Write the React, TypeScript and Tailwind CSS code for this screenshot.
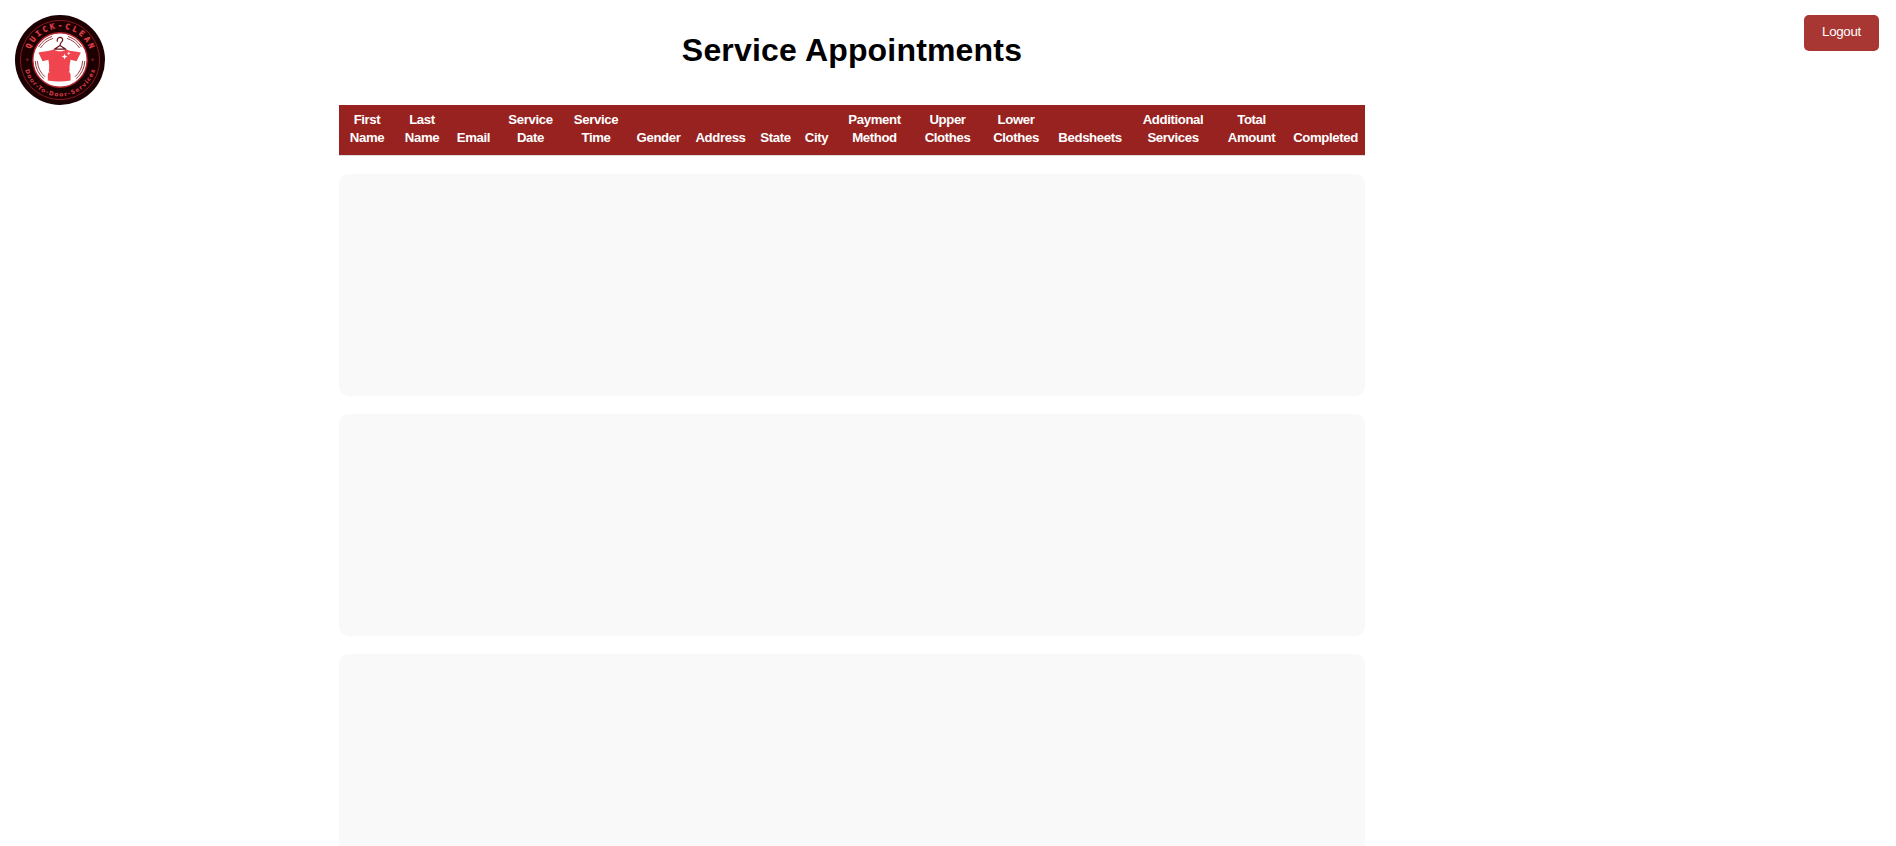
const columns = [
  { lines: ["First", "Name"], width: "w-[56px]" },
  { lines: ["Last", "Name"], width: "w-[54px]" },
  { lines: ["Email"], width: "w-[49px]" },
  { lines: ["Service", "Date"], width: "w-[65px]" },
  { lines: ["Service", "Time"], width: "w-[66px]" },
  { lines: ["Gender"], width: "w-[59px]" },
  { lines: ["Address"], width: "w-[65px]" },
  { lines: ["State"], width: "w-[45px]" },
  { lines: ["City"], width: "w-[37px]" },
  { lines: ["Payment", "Method"], width: "w-[79px]" },
  { lines: ["Upper", "Clothes"], width: "w-[67px]" },
  { lines: ["Lower", "Clothes"], width: "w-[70px]" },
  { lines: ["Bedsheets"], width: "w-[78px]" },
  { lines: ["Additional", "Services"], width: "w-[88px]" },
  { lines: ["Total", "Amount"], width: "w-[69px]" },
  { lines: ["Completed"], width: "w-[79px]" },
];

function Logo() {
  return (
    <svg viewBox="0 0 90 90" className="size-[90px]" role="img" aria-label="Quick-Clean">
      <defs>
        <path id="arc-top" d="M13.4 45a31.6 31.6 0 0 1 63.2 0" />
        <path id="arc-bottom" d="M8.6 45a36.4 36.4 0 0 0 72.8 0" />
      </defs>
      <circle cx="45" cy="45" r="45" fill="#1c0002" />
      <circle cx="45" cy="45" r="39.6" fill="none" stroke="#851a20" strokeWidth="1" />
      <circle cx="45" cy="45" r="27.2" fill="#fff" stroke="#b5222c" strokeWidth="1.4" />
      <text fill="#e0404a" stroke="#e0404a" strokeWidth="0.2" fontSize="7.8" fontWeight="700" fontFamily="'DejaVu Sans Mono', monospace" textAnchor="middle">
        <textPath href="#arc-top" startOffset="50%" textLength="77">QUICK-CLEAN</textPath>
      </text>
      <text fill="#d83c46" fontSize="5.8" fontWeight="700" fontFamily="'DejaVu Sans', sans-serif" textAnchor="middle">
        <textPath href="#arc-bottom" startOffset="50%" textLength="94">Door-To-Door-Services</textPath>
      </text>
      <path d="M12.3 43v3.4M10.6 44.7H14M77.7 43v3.4M76 44.7h3.4" stroke="#8d1c23" strokeWidth="0.8" />
      <g fill="none" stroke="#8f2830" strokeWidth="0.9">
        <path d="M23.6 32A24.9 24.9 0 0 1 37 21.4M25.5 33A22.7 22.7 0 0 1 38 23.4" />
        <path d="M53 21.4A24.9 24.9 0 0 1 66.4 32M52 23.4A22.7 22.7 0 0 1 64.5 33" />
        <path d="M20.2 46A24.9 24.9 0 0 0 29 63.8M22.4 46A22.7 22.7 0 0 0 30 61.8" />
        <path d="M69.8 46A24.9 24.9 0 0 1 61 63.8M67.6 46A22.7 22.7 0 0 1 60 61.8" />
      </g>
      <path
        d="M38.6 34.4c-4 2-10 1.6-15.2 3l4.2 8.8 5.8-1.4c1.4 6.4.8 11-.6 15.2v5.6c7.4 1.2 15.4 1.2 22.8 0V60c-1.6-4.4-1.4-9.6 0-15.2l6 1.4 4.2-8.8c-5-1.2-10.4-1-14.4-3-3.6 2.4-9.2 2.4-12.8 0Z"
        fill="#f0454f"
      />
      <path d="m32.6 55.4 2.6 1.8-2.6.3M56 55l-2.6 2.2 2.6.3" fill="#fff" />
      <path d="m49.6 38.6.8 2.2 2.2.8-2.2.8-.8 2.2-.8-2.2-2.2-.8 2.2-.8Zm4.2-2.2.5 1.4 1.4.5-1.4.5-.5 1.4-.5-1.4-1.4-.5 1.4-.5Z" fill="#fff" />
      <path
        d="M42.2 26.2c-.5-4.8 5.8-4.8 5.5-1.2-.2 2.4-2.7 2-2.7 5.5M45 30.5l-5.7 3.7h11.6L45 30.5"
        fill="none"
        stroke="#651117"
        strokeWidth="1.2"
        strokeLinejoin="round"
        strokeLinecap="round"
      />
    </svg>
  );
}

export default function App() {
  return (
    <div className="h-[846px] overflow-hidden bg-white font-['Liberation_Sans',Arial,sans-serif] text-black">
      <header className="flex h-[105px] items-start pt-[15px] pr-[17px] pl-[15px]">
        <div className="w-[324px] shrink-0">
          <Logo />
        </div>
        <h1 className="w-[1026px] shrink-0 pt-[17px] text-center text-[32px] leading-[37px] font-bold tracking-[0.18px]">
          Service Appointments
        </h1>
        <button className="ml-auto h-[36px] w-[75px] rounded-[5px] bg-[#a83632] pb-[3px] text-[13.33px] leading-none tracking-[-0.3px] text-white">
          Logout
        </button>
      </header>
      <main className="ml-[339px] w-[1026px]">
        <table className="w-full table-fixed border-separate border-spacing-0">
          <thead>
            <tr>
              {columns.map((column, index) => (
                <th
                  key={index}
                  className={`${column.width} h-[51px] border-b border-[#ddd] bg-[#98221f] p-0 pb-[8px] text-center align-bottom text-[13.2px] leading-[18px] font-bold tracking-[-0.38px] whitespace-nowrap text-white`}
                >
                  {column.lines.map((line) => (
                    <span key={line} className="block">
                      {line}
                    </span>
                  ))}
                </th>
              ))}
            </tr>
          </thead>
        </table>
        <div className="flex flex-col gap-[18px] pt-[18px]">
          {[0, 1, 2].map((card) => (
            <section key={card} className="h-[222px] shrink-0 rounded-[10px] bg-[#f9f9f9]" />
          ))}
        </div>
      </main>
    </div>
  );
}
